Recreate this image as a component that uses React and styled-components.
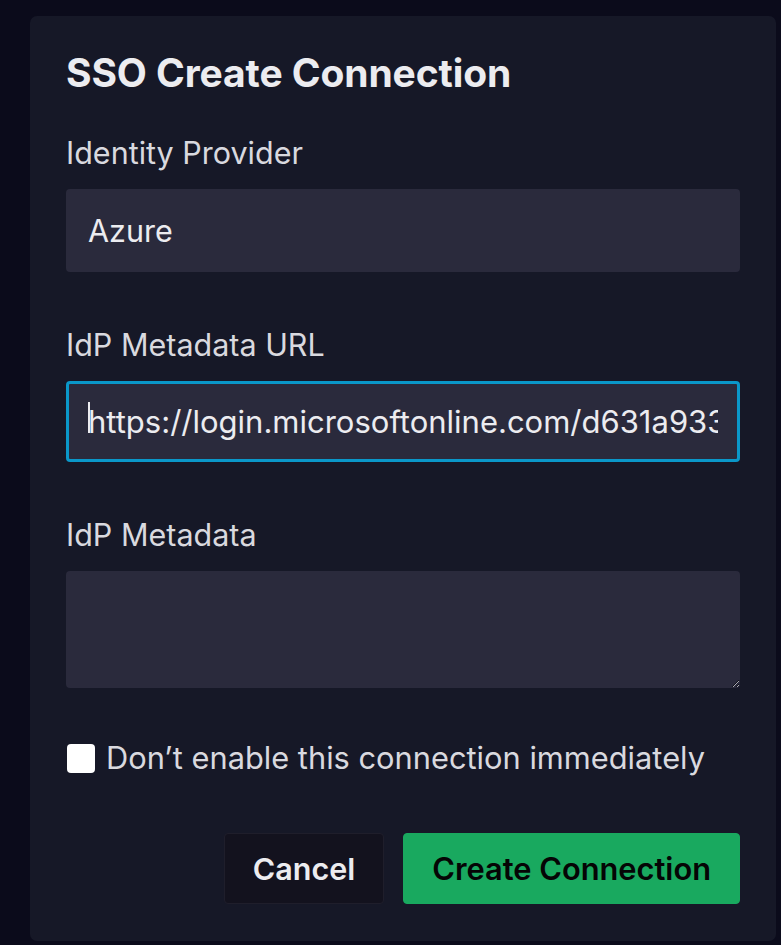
import React from "react"
import styled, { createGlobalStyle } from "styled-components"

const colors = {
  page: "#0b0b1b",
  modal: "#161827",
  field: "#2a2a3c",
  text: "#ececf0",
  label: "#d9d9df",
  focus: "#0a97c9",
  green: "#19a95f",
  cancel: "#13121e",
}

const GlobalStyle = createGlobalStyle`
  html, body {
    margin: 0;
    padding: 0;
    background: ${colors.page};
    font-family: Inter, "Noto Sans", sans-serif;
    -webkit-font-smoothing: antialiased;
  }
  * { box-sizing: border-box; }
`

const Page = styled.div`
  min-height: 945px;
  padding: 16px 5px 5px 30px;
`

const Modal = styled.form`
  background: ${colors.modal};
  border-radius: 7px;
  padding: 33px 36px 37px 36px;
  display: flex;
  flex-direction: column;
`

const Title = styled.h1`
  margin: 0 0 38px;
  font-size: 39px;
  font-weight: 700;
  line-height: 48px;
  color: ${colors.text};
  letter-spacing: -0.1px;
`

const Field = styled.div`
  display: flex;
  flex-direction: column;
  gap: 18px;
  margin-bottom: ${(p) => p.$gap || 55}px;
`

const Label = styled.label`
  font-size: 30.5px;
  line-height: 36px;
  color: ${colors.label};
`

const InputWrap = styled.div`
  position: relative;
`

const Input = styled.input`
  display: block;
  width: 100%;
  height: ${(p) => (p.$focused ? 81 : 83)}px;
  background: ${colors.field};
  border: ${(p) => (p.$focused ? `3px solid ${colors.focus}` : "none")};
  border-radius: 4px;
  padding: 0 ${(p) => (p.$focused ? 19 : 22)}px;
  font-family: inherit;
  font-size: ${(p) => (p.$focused ? 31 : 30.5)}px;
  color: ${colors.text};
  outline: none;
`

const Caret = styled.span`
  position: absolute;
  left: 22px;
  top: 21px;
  width: 2px;
  height: 31px;
  background: ${colors.text};
`

const TextArea = styled.textarea`
  display: block;
  width: 100%;
  height: 117px;
  background: ${colors.field};
  border: none;
  border-radius: 4px;
  padding: 18px 22px;
  font-family: inherit;
  font-size: 30.5px;
  color: ${colors.text};
  outline: none;
  resize: vertical;
`

const CheckRow = styled.label`
  display: flex;
  align-items: center;
  gap: 11px;
  margin: 0 0 57px 1px;
  font-size: 30.8px;
  line-height: 36px;
  color: ${colors.label};
`

const Check = styled.input`
  appearance: none;
  margin: 0;
  width: 28px;
  height: 29px;
  background: #fff;
  border-radius: 4px;
  flex-shrink: 0;
`

const Actions = styled.div`
  display: flex;
  justify-content: flex-end;
  gap: 19px;
`

const Button = styled.button`
  height: 71px;
  border-radius: 4px;
  font-family: inherit;
  font-size: ${(p) => (p.$primary ? 30.8 : 30.5)}px;
  font-weight: 600;
  cursor: pointer;
  padding: 0 28px;
  background: ${(p) => (p.$primary ? colors.green : colors.cancel)};
  color: ${(p) => (p.$primary ? "#050505" : colors.text)};
  border: 1px solid ${(p) => (p.$primary ? colors.green : "#1f1e2b")};
`

const App = () => {
  return (
    <>
      <GlobalStyle />
      <Page>
        <Modal onSubmit={(e) => e.preventDefault()}>
          <Title>SSO Create Connection</Title>
          <Field>
            <Label>Identity Provider</Label>
            <Input defaultValue="Azure" readOnly />
          </Field>
          <Field>
            <Label>IdP Metadata URL</Label>
            <InputWrap>
              <Input
                $focused
                defaultValue="https://login.microsoftonline.com/d631a933-3c5d-4f55-9e1b-aa6e8b2f7c9a/federationmetadata/2007-06/federationmetadata.xml"
              />
              <Caret />
            </InputWrap>
          </Field>
          <Field $gap={52}>
            <Label>IdP Metadata</Label>
            <TextArea />
          </Field>
          <CheckRow>
            <Check type="checkbox" />
            Don’t enable this connection immediately
          </CheckRow>
          <Actions>
            <Button type="button">Cancel</Button>
            <Button type="submit" $primary>
              Create Connection
            </Button>
          </Actions>
        </Modal>
      </Page>
    </>
  )
}

export default App
